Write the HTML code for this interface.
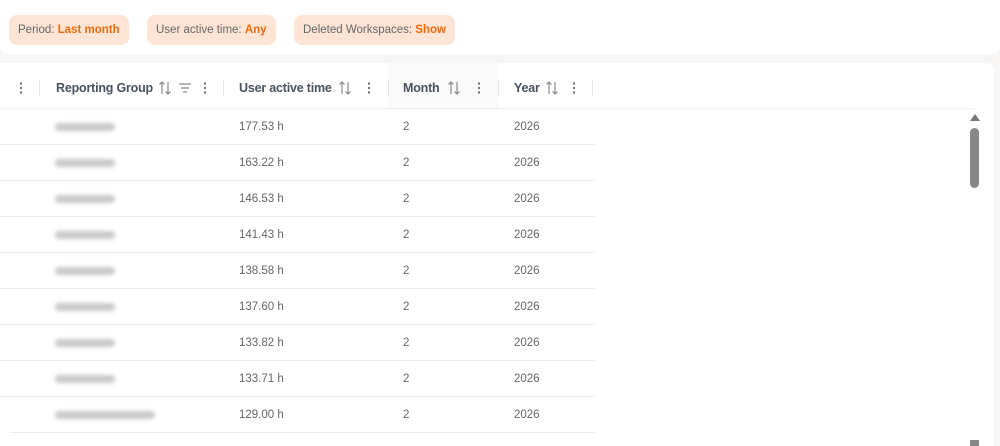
<!DOCTYPE html>
<html><head><style>
*{margin:0;padding:0;box-sizing:border-box}
body{width:1000px;height:446px;overflow:hidden;background:#f7f6f4;font-family:"Liberation Sans",sans-serif;position:relative}
.top{position:absolute;left:0;top:0;width:1000px;height:54px;background:#fff;border-radius:0 0 8px 8px}
.chip{position:absolute;top:15px;height:30px;background:#fde4d4;border-radius:8px;font-size:11.5px;color:#666;line-height:30px;padding:0 9px}
.chip b{color:#f06a0f}
.panel{position:absolute;left:0;top:63px;width:994px;height:383px;background:#fff;border-radius:0 8px 0 0}
.h{position:absolute;top:18px;font-size:12.5px;font-weight:bold;color:#4a5260;letter-spacing:-0.2px}
.ic{position:absolute;top:17px}
.dv{position:absolute;top:17px;width:1px;height:16px;background:#e6e6e6}
.line{position:absolute;left:0;width:595px;height:1px;background:#ececec}
.c{position:absolute;font-size:11.5px;color:#666}
.blur{position:absolute;left:55px;width:60px;height:8px;background:#c8c8c8;border-radius:4px;filter:blur(2px)}
</style></head><body>
<div class="top">
<div class="chip" style="left:9px">Period: <b>Last month</b></div>
<div class="chip" style="left:147px">User active time: <b>Any</b></div>
<div class="chip" style="left:294px">Deleted Workspaces: <b>Show</b></div>
</div>
<div class="panel">
<div style="position:absolute;left:388px;top:0;width:110px;height:45px;background:#fafafa"></div>
<div id="hd"></div>
<div style="position:absolute;left:0;top:45px;width:975px;height:1px;background:#eee"></div>
<div style="position:absolute;left:970px;top:51px;width:0;height:0;border-left:5px solid transparent;border-right:5px solid transparent;border-bottom:7px solid #777"></div>
<div style="position:absolute;left:970px;top:65px;width:9px;height:60px;background:#888;border-radius:5px"></div>
<div style="position:absolute;left:970px;top:377px;width:9px;height:6px;background:#888"></div>
</div>
<div id="rows"></div>
<script>
var sort='<svg width="14" height="16" viewBox="0 0 14 16" fill="none" stroke="#888" stroke-width="1.2"><path d="M4 14V2M1.5 4.5L4 2l2.5 2.5M10 2v12M7.5 11.5L10 14l2.5-2.5"/></svg>';
var kb='<svg width="4" height="16" viewBox="0 0 4 16"><circle cx="2" cy="3.5" r="1.1" fill="#666"/><circle cx="2" cy="8" r="1.1" fill="#666"/><circle cx="2" cy="12.5" r="1.1" fill="#666"/></svg>';
var flt='<svg width="14" height="16" viewBox="0 0 14 16" stroke="#888" stroke-width="1.2"><path d="M1 4h12M3 8h8M5 12h4"/></svg>';
var hd='';
function ic(x,s){hd+='<div class="ic" style="left:'+x+'px">'+s+'</div>';}
function dv(x){hd+='<div class="dv" style="left:'+x+'px"></div>';}
function ht(x,t){hd+='<div class="h" style="left:'+x+'px">'+t+'</div>';}
ic(19,kb);dv(39);ht(56,'Reporting Group');ic(158,sort);ic(178,flt);ic(203,kb);dv(223);
ht(239,'User active time');ic(338,sort);ic(367,kb);dv(388);
ht(403,'Month');ic(447,sort);ic(477,kb);dv(498);
ht(514,'Year');ic(545,sort);ic(572,kb);dv(592);
document.getElementById('hd').innerHTML=hd;
var v=["177.53","163.22","146.53","141.43","138.58","137.60","133.82","133.71","129.00"],h="";
for(var i=0;i<9;i++){var y=108+36*i;
h+='<div class="blur" style="top:'+(y+15)+'px;width:'+(i==8?100:60)+'px"></div>';
h+='<div class="c" style="left:239px;top:'+(y+13)+'px">'+v[i]+' h</div>';
h+='<div class="c" style="left:403px;top:'+(y+13)+'px">2</div>';
h+='<div class="c" style="left:514px;top:'+(y+13)+'px">2026</div>';
h+='<div class="line" style="top:'+(y+36)+'px;'+(i==8?'left:10px;width:585px':'')+'"></div>';}
document.getElementById('rows').innerHTML=h;
</script>
</body></html>
